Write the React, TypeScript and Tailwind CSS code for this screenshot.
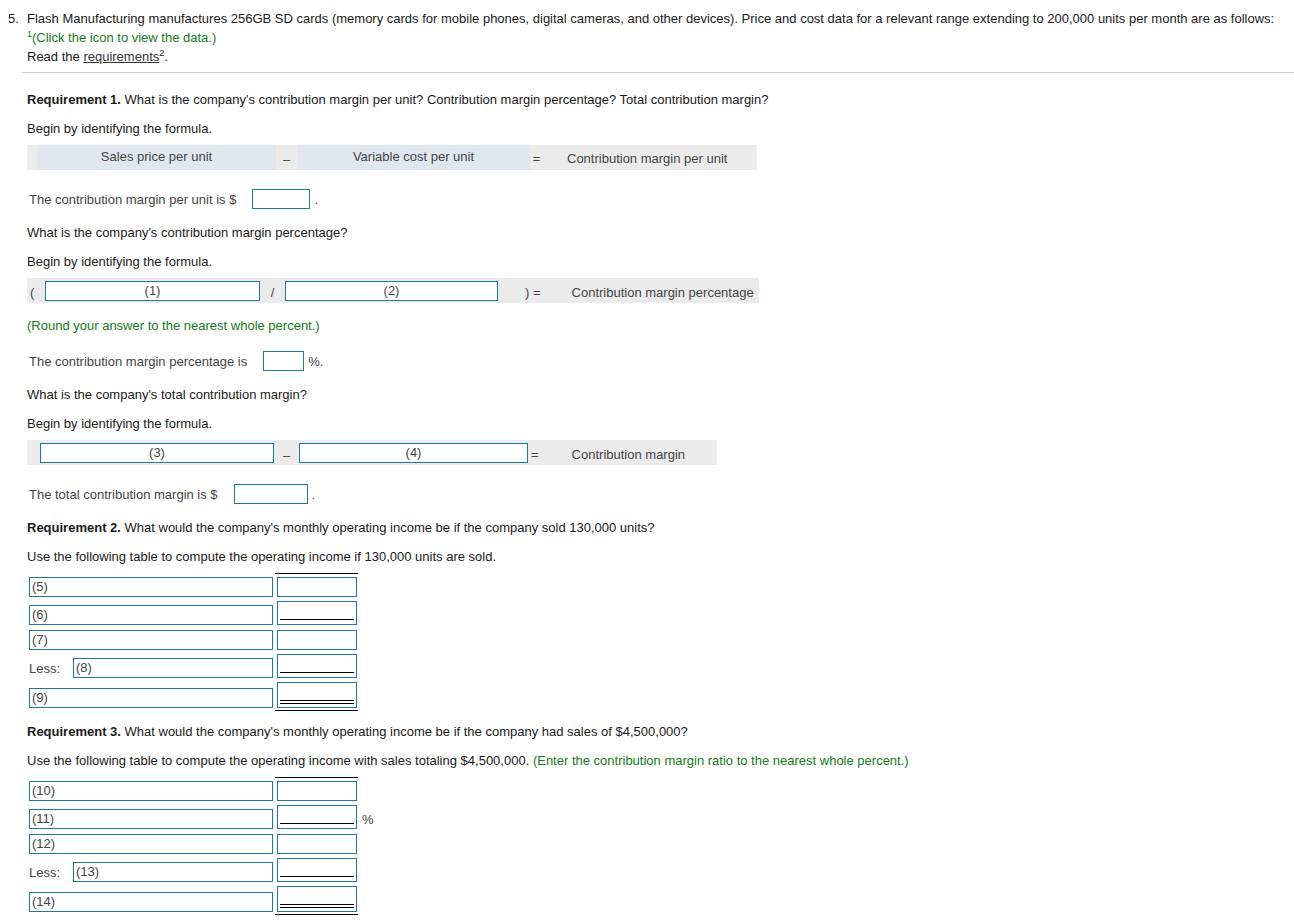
import React from "react";

const BOX = "border border-[#1b7b98] bg-white box-border";

function LeftInput({ label, className }: { label: string; className: string }) {
  return (
    <div className={`${BOX} h-[20px] pl-[2px] flex items-center text-[#444] leading-[18px] ${className}`}>
      {label}
    </div>
  );
}

function RightPlain() {
  return <div className={`${BOX} w-[80px] h-[20px]`} />;
}

function RightSingle() {
  return (
    <div className={`${BOX} w-[80px] h-[24px] flex items-end px-[2px] pb-[4px]`}>
      <div className="h-px w-full bg-black" />
    </div>
  );
}

function RightDouble() {
  return (
    <div className={`${BOX} w-[80px] h-[26px] flex items-end px-[2px] pb-[3px]`}>
      <div className="h-[4px] w-full border-t border-b border-black" />
    </div>
  );
}

function Table({ n, percent }: { n: number[]; percent?: boolean }) {
  return (
    <div className="ml-[2px]">
      <div className="ml-[246px] w-[83px] h-px bg-black" />
      <div className="flex items-end gap-[4px] mt-[3px]">
        <LeftInput label={`(${n[0]})`} className="w-[244px]" />
        <RightPlain />
      </div>
      <div className="flex items-end gap-[4px] mt-[4px]">
        <LeftInput label={`(${n[1]})`} className="w-[244px]" />
        <RightSingle />
        {percent ? <span className="text-[#444] self-center pt-[5px] ml-[1px]">%</span> : null}
      </div>
      <div className="flex items-end gap-[4px] mt-[5px]">
        <LeftInput label={`(${n[2]})`} className="w-[244px]" />
        <RightPlain />
      </div>
      <div className="flex items-end gap-[4px] mt-[4px]">
        <div className="w-[44px] h-[20px] flex items-center text-[#444]">Less:</div>
        <LeftInput label={`(${n[3]})`} className="w-[200px] -ml-[4px]" />
        <RightSingle />
      </div>
      <div className="flex items-end gap-[4px] mt-[4px]">
        <LeftInput label={`(${n[4]})`} className="w-[244px]" />
        <RightDouble />
      </div>
      <div className="ml-[246px] w-[83px] h-px bg-black mt-[2px]" />
    </div>
  );
}

export default function App() {
  return (
    <div
      className="bg-white w-[1294px] h-[922px] overflow-hidden text-[13px] leading-[19px] text-[#1a1a1a]"
      style={{ fontFamily: '"Liberation Sans", Arial, sans-serif' }}
    >
      <div className="flex pl-[8px] pt-[9px]">
        <div className="w-[19px] shrink-0">5.</div>
        <div className="flex-1">
          <div className="whitespace-nowrap">
            Flash Manufacturing manufactures 256GB SD cards (memory cards for mobile phones, digital cameras, and other devices). Price and cost data for a relevant range extending to 200,000 units per month are as follows:
          </div>
          <div className="text-[#177a1c]">
            <sup className="text-[9px] top-[-0.55em]">1</sup>(Click the icon to view the data.)
          </div>
          <div>
            Read the <span className="underline text-[#333]">requirements</span>
            <sup className="text-[9px] top-[-0.55em]">2</sup>.
          </div>
          <div className="-ml-[5px] mt-[6px] h-px bg-[#cbd1df]" />

          <div className="mt-[17px]">
            <span className="font-bold">Requirement 1.</span> What is the company's contribution margin per unit? Contribution margin percentage? Total contribution margin?
          </div>
          <div className="mt-[10px]">Begin by identifying the formula.</div>

          {/* formula 1 */}
          <div className="mt-[7px] flex w-[730px] h-[25px] bg-[#ebebeb] text-[#444]">
            <div className="w-[10px]" />
            <div className="w-[239px] bg-[#e1e7f1] text-center leading-[24px]">Sales price per unit</div>
            <div className="w-[21px] text-center leading-[24px] pt-[3px]">–</div>
            <div className="w-[233px] bg-[#e1e7f1] text-center leading-[24px]">Variable cost per unit</div>
            <div className="w-[13px] text-center leading-[27px]">=</div>
            <div className="ml-[24px] leading-[27px]">Contribution margin per unit</div>
          </div>

          <div className="mt-[19px] ml-[2px] flex items-center h-[20px] text-[#444]">
            <span>The contribution margin per unit is $</span>
            <div className={`${BOX} w-[58px] h-[20px] ml-[16px]`} />
            <span className="ml-[4px]">.</span>
          </div>

          <div className="mt-[14px]">What is the company's contribution margin percentage?</div>
          <div className="mt-[10px]">Begin by identifying the formula.</div>

          {/* formula 2 */}
          <div className="mt-[7px] flex items-center w-[732px] h-[25px] bg-[#ebebeb] text-[#444]">
            <div className="w-[18px] pl-[3px] pt-[3px]">(</div>
            <div className={`${BOX} w-[215px] h-[20px] text-center leading-[18px]`}>(1)</div>
            <div className="w-[25px] text-center pt-[3px]">/</div>
            <div className={`${BOX} w-[213px] h-[20px] text-center leading-[18px]`}>(2)</div>
            <div className="ml-[27px] pt-[3px]">) =</div>
            <div className="ml-[31px] pt-[3px]">Contribution margin percentage</div>
          </div>

          <div className="mt-[13px] text-[#177a1c]">(Round your answer to the nearest whole percent.)</div>

          <div className="mt-[16px] ml-[2px] flex items-center h-[20px] text-[#444]">
            <span>The contribution margin percentage is</span>
            <div className={`${BOX} w-[41px] h-[20px] ml-[16px]`} />
            <span className="ml-[4px]">%.</span>
          </div>

          <div className="mt-[14px]">What is the company's total contribution margin?</div>
          <div className="mt-[10px]">Begin by identifying the formula.</div>

          {/* formula 3 */}
          <div className="mt-[7px] flex items-center w-[690px] h-[25px] bg-[#ebebeb] text-[#444]">
            <div className="w-[13px]" />
            <div className={`${BOX} w-[234px] h-[20px] text-center leading-[18px]`}>(3)</div>
            <div className="w-[25px] text-center pt-[5px]">–</div>
            <div className={`${BOX} w-[229px] h-[20px] text-center leading-[18px]`}>(4)</div>
            <div className="ml-[3px] pt-[3px]">=</div>
            <div className="ml-[33px] pt-[3px]">Contribution margin</div>
          </div>

          <div className="mt-[19px] ml-[2px] flex items-center h-[20px] text-[#444]">
            <span>The total contribution margin is $</span>
            <div className={`${BOX} w-[74px] h-[20px] ml-[16px]`} />
            <span className="ml-[4px]">.</span>
          </div>

          <div className="mt-[14px]">
            <span className="font-bold">Requirement 2.</span> What would the company's monthly operating income be if the company sold 130,000 units?
          </div>
          <div className="mt-[10px]">Use the following table to compute the operating income if 130,000 units are sold.</div>

          <div className="mt-[7px]">
            <Table n={[5, 6, 7, 8, 9]} />
          </div>

          <div className="mt-[11px]">
            <span className="font-bold">Requirement 3.</span> What would the company's monthly operating income be if the company had sales of $4,500,000?
          </div>
          <div className="mt-[10px]">
            Use the following table to compute the operating income with sales totaling $4,500,000.{" "}
            <span className="text-[#177a1c]">(Enter the contribution margin ratio to the nearest whole percent.)</span>
          </div>

          <div className="mt-[7px]">
            <Table n={[10, 11, 12, 13, 14]} percent />
          </div>
        </div>
      </div>
    </div>
  );
}
